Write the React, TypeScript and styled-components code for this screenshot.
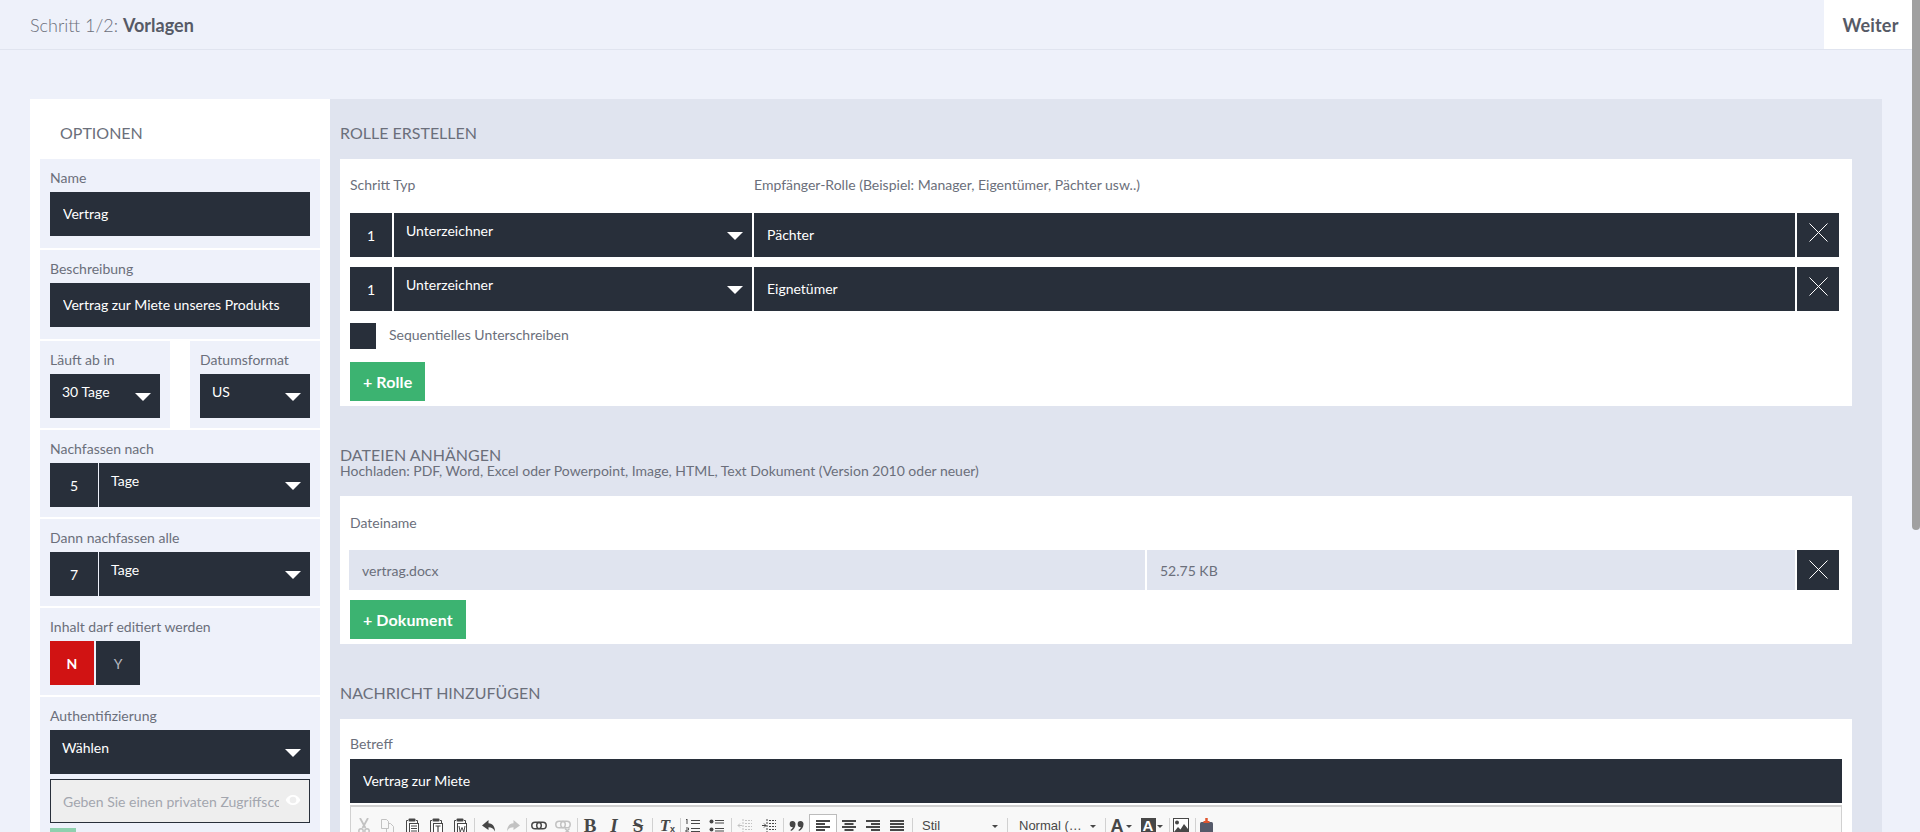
import React from "react";
import styled, { createGlobalStyle } from "styled-components";

const DARK = "#282f3a";
const BG = "#eef1fa";
const PANEL = "#e0e4ef";
const TEXT = "#6b6f7b";
const GREEN = "#3cb371";

const Global = createGlobalStyle`
  html, body { margin: 0; padding: 0; background: ${BG}; }
  body { font-family: Lato, "Open Sans", sans-serif; color: ${TEXT}; font-size: 14px; }
  * { box-sizing: border-box; }
  html { scrollbar-width: none; }
`;

const Page = styled.div`
  min-height: 1306px;
  padding-right: 8px;
`;
const ScrollThumb = styled.div`
  position: fixed;
  top: 0;
  right: 0;
  width: 8px;
  height: 530px;
  background: #a0a0a0;
  border-radius: 0 0 4px 4px;
`;
const TopBar = styled.header`
  height: 50px;
  display: flex;
  justify-content: space-between;
  align-items: stretch;
  border-bottom: 1px solid ${PANEL};
  padding-left: 30px;
`;
const Step = styled.div`
  align-self: center;
  font-size: 18px;
  font-weight: 300;
  color: ${TEXT};
  b { font-weight: 700; color: #565a66; }
`;
const NextButton = styled.button`
  width: 88px;
  border: 0;
  background: #fff;
  font: 700 18px Lato, sans-serif;
  letter-spacing: 0.2px;
  color: #565a66;
  padding: 0 0 0 5px;
`;
const Content = styled.main`
  display: flex;
  align-items: stretch;
  padding: 49px 30px 40px;
`;
const Sidebar = styled.aside`
  width: 300px;
  flex: none;
  background: #fff;
  padding: 0 10px 10px;
  display: flex;
  flex-direction: column;
  align-items: stretch;
  gap: 2px;
`;
const Panel = styled.section`
  flex: 1;
  min-width: 0;
  background: ${PANEL};
  padding: 0 30px 40px 10px;
`;
const Heading = styled.h2<{ $top?: number; $inset?: number; $tight?: boolean; $after?: number }>`
  margin: ${(p) => p.$top ?? 24}px 0 ${(p) => p.$after ?? (p.$tight ? 0 : 16)}px;
  padding-left: ${(p) => p.$inset ?? 0}px;
  font-size: 16px;
  font-weight: 400;
  line-height: ${(p) => (p.$tight ? 16 : 20)}px;
  color: ${TEXT};
  text-transform: uppercase;
`;
const SubHeading = styled.p`
  margin: 0 0 17px;
  font-size: 14px;
  line-height: 16px;
  color: ${TEXT};
`;
const Field = styled.div<{ $pad?: number; $half?: boolean }>`
  background: ${BG};
  padding: 9px 10px ${(p) => p.$pad ?? 12}px;
  min-width: 0;
  ${(p) => p.$half && "flex: 1;"}
`;
const FieldPair = styled.div`
  display: flex;
  gap: 20px;
`;
const FieldLabel = styled.label`
  display: block;
  font-size: 14px;
  line-height: 20px;
  margin-bottom: 4px;
  color: ${TEXT};
`;
const DarkInput = styled.input`
  display: block;
  width: 100%;
  height: 44px;
  border: 0;
  outline: 0;
  background: ${DARK};
  color: #fff;
  font: 400 14px Lato, sans-serif;
  padding: 0 13px 2px;
`;
const Dropdown = styled.div`
  position: relative;
  height: 44px;
  background: ${DARK};
  color: #fff;
  font-size: 14px;
  line-height: 20px;
  padding: 8px 40px 0 12px;
  min-width: 0;
  &::after {
    content: "";
    position: absolute;
    right: 9px;
    top: 19px;
    border-left: 8px solid transparent;
    border-right: 8px solid transparent;
    border-top: 8px solid #fff;
  }
`;
const Combo = styled.div`
  display: grid;
  grid-template-columns: 48px 1fr;
  gap: 1px;
`;
const NumberCell = styled.div`
  height: 44px;
  background: ${DARK};
  color: #fff;
  font-size: 14px;
  display: flex;
  align-items: center;
  justify-content: center;
`;
const Toggle = styled.div`
  display: flex;
  gap: 2px;
`;
const ToggleButton = styled.button<{ $on?: boolean }>`
  width: 44px;
  height: 44px;
  border: 0;
  padding: 0;
  background: ${(p) => (p.$on ? "#d11313" : DARK)};
  color: ${(p) => (p.$on ? "#fff" : "#b4b8c0")};
  font: ${(p) => (p.$on ? 700 : 400)} 14px Lato, sans-serif;
`;
const AccessWrap = styled.div`
  position: relative;
  margin-top: 5px;
`;
const AccessInput = styled.input`
  display: block;
  width: 100%;
  height: 44px;
  border: 1px solid ${DARK};
  outline: 0;
  background: #eee;
  font: 400 14px Lato, sans-serif;
  padding: 0 30px 0 12px;
  &::placeholder { color: #a3a6ae; opacity: 1; }
`;
const EyeIcon = styled.svg`
  position: absolute;
  right: 9px;
  top: 13px;
  width: 16px;
  height: 16px;
  fill: #fff;
`;
const GreenBox = styled.div`
  width: 26px;
  height: 26px;
  margin-top: 5px;
  background: #8fd0ae;
`;
const Card = styled.div<{ $top: number; $bottom: number }>`
  background: #fff;
  padding: ${(p) => p.$top}px 10px ${(p) => p.$bottom}px;
`;
const Columns = styled.div`
  display: grid;
  grid-template-columns: 404px 1fr;
  line-height: 20px;
  margin-bottom: 18px;
  color: ${TEXT};
`;
const ColumnLabel = styled.div`
  line-height: 20px;
  margin-bottom: 17px;
  color: ${TEXT};
`;
const RoleRow = styled.div`
  display: grid;
  grid-template-columns: 42px 358px 1fr 42px;
  gap: 2px;
  margin: 0 3px 10px 0;
`;
const CloseButton = styled.button`
  height: 100%;
  min-height: 40px;
  border: 0;
  background: ${DARK};
  padding: 10px 0 0;
  display: flex;
  justify-content: center;
  align-items: flex-start;
  svg { display: block; }
`;
const CheckRow = styled.div`
  display: flex;
  align-items: center;
  gap: 13px;
  margin: 12px 0 13px;
`;
const Check = styled.span`
  width: 26px;
  height: 26px;
  background: ${DARK};
`;
const CheckText = styled.span`
  padding-bottom: 3px;
`;
const AddButton = styled.button`
  display: block;
  height: 39px;
  border: 0;
  background: ${GREEN};
  color: #fff;
  font: 700 16px Lato, sans-serif;
  letter-spacing: 0.1px;
  padding: 0 13px;
`;
const FileRow = styled.div`
  display: grid;
  grid-template-columns: 796fr 648fr 42px;
  gap: 2px;
  height: 40px;
  margin: 0 3px 10px -1px;
`;
const FileCell = styled.div`
  background: ${PANEL};
  color: ${TEXT};
  display: flex;
  align-items: center;
  padding: 0 13px;
`;
const SubjectLabel = styled.div`
  line-height: 20px;
  margin-bottom: 5px;
`;
const Editor = styled.div`
  margin-top: 2px;
  border: 1px solid #d1d1d1;
  border-top-width: 2px;
  background: #f8f8f8;
  min-height: 300px;
`;
const Toolbar = styled.div`
  display: flex;
  align-items: flex-start;
  padding: 7px 0 0 1px;
  height: 44px;
  color: #474747;
`;
const ToolButton = styled.span<{ $active?: boolean; $w?: number; $pr?: number }>`
  flex: none;
  width: ${(p) => p.$w ?? 24}px;
  height: 24px;
  padding-right: ${(p) => p.$pr ?? 0}px;
  display: flex;
  align-items: center;
  justify-content: center;
  position: relative;
  ${(p) => p.$active && `background:#fff; border:1px solid #bcbcbc;`}
  svg { display: block; }
`;
const Sep = styled.span<{ $l: number; $r: number }>`
  flex: none;
  width: 1px;
  height: 22px;
  margin: 4px ${(p) => p.$r}px 0 ${(p) => p.$l}px;
  background: #d1d1d1;
`;
const Glyph = styled.span<{ $serif?: boolean; $italic?: boolean; $strike?: boolean; $under?: boolean; $size?: number }>`
  font-family: ${(p) => (p.$serif ? '"Liberation Serif"' : '"Liberation Sans"')}, serif;
  font-weight: 700;
  font-size: ${(p) => p.$size ?? 18}px;
  line-height: 16px;
  color: #474747;
  font-style: ${(p) => (p.$italic ? "italic" : "normal")};
  text-decoration: ${(p) => (p.$strike ? "line-through" : p.$under ? "underline" : "none")};
`;
const Clear = styled.small`
  position: absolute;
  right: 2px;
  top: 11px;
  font: 700 9px/9px "Liberation Sans", sans-serif;
  color: #474747;
`;
const BoxGlyph = styled.span`
  font: 700 15px/16px "Liberation Sans", sans-serif;
  width: 15px;
  height: 16px;
  flex: none;
  text-align: center;
  background: #474747;
  color: #fff;
`;
const Caret = styled.i<{ $right: number }>`
  position: absolute;
  width: 0;
  height: 0;
  right: ${(p) => p.$right}px;
  top: 11px;
  border-left: 3px solid transparent;
  border-right: 3px solid transparent;
  border-top: 3px solid #474747;
`;
const ComboBox = styled.span<{ $w: number; $indent: number }>`
  flex: none;
  position: relative;
  width: ${(p) => p.$w}px;
  height: 24px;
  padding-left: ${(p) => p.$indent}px;
  font: 400 13px/24px "Liberation Sans", sans-serif;
  color: #484848;
  i {
    position: absolute;
    right: 9px;
    top: 11px;
    border-left: 3.5px solid transparent;
    border-right: 3.5px solid transparent;
    border-top: 3.5px solid #474747;
  }
`;

type IconProps = { children: React.ReactNode; faded?: boolean };
const Ico = ({ children, faded }: IconProps) => (
  <svg width="16" height="16" viewBox="0 0 16 16" fill="none" opacity={faded ? 0.3 : 1}>
    {children}
  </svg>
);
const S = { stroke: "#474747", strokeWidth: 1 };

const Cut = () => (
  <Ico faded>
    <path d="M4 0l5.500 10M12 0L6.500 10" stroke="#474747" strokeWidth="1.800" />
    <circle cx="5" cy="13" r="2.200" stroke="#474747" strokeWidth={1.4} />
    <circle cx="11" cy="13" r="2.200" stroke="#474747" strokeWidth={1.4} />
  </Ico>
);
const Copy = () => (
  <Ico faded>
    <path d="M1.500 1.500h5l2 2v7h-7zM8.500 5.500h2l3 3v7h-7v-5" {...S} />
  </Ico>
);
const PasteBase = ({ children }: { children: React.ReactNode }) => (
  <Ico>
    <path d="M4 2.500H2.500v13H4M12 2.500h1.500v3" {...S} />
    <rect x="4.500" y="0.500" width="7" height="3" rx="1" fill="#474747" />
    <rect x="5.500" y="5.500" width="9" height="10" {...S} fill="#fff" />
    {children}
  </Ico>
);
const Paste = () => (
  <PasteBase>
    <path d="M7 8h6M7 10.500h6M7 13h6" {...S} />
  </PasteBase>
);
const PasteText = () => (
  <PasteBase>
    <path d="M7.500 8h5M10 8v6" stroke="#474747" strokeWidth={1.2} />
  </PasteBase>
);
const PasteWord = () => (
  <PasteBase>
    <path d="M7 8l1.200 6L10 9.500 11.800 14 13 8" {...S} />
  </PasteBase>
);
const Undo = () => (
  <Ico>
    <path d="M7.500 2L1 7.500 7.500 12V9.200c3 0 5 1 6.500 4.300C14 9 12 5.500 7.500 5.300z" fill="#474747" />
  </Ico>
);
const Redo = () => (
  <Ico faded>
    <path d="M8.500 2L15 7.500 8.500 12V9.200c-3 0-5 1-6.500 4.300C2 9 4 5.500 8.500 5.300z" fill="#474747" />
  </Ico>
);
const Link = () => (
  <Ico>
    <rect x="0.800" y="4.200" width="9.500" height="6.600" rx="3.300" stroke="#474747" strokeWidth="1.500" />
    <rect x="5.700" y="4.200" width="9.500" height="6.600" rx="3.300" stroke="#474747" strokeWidth="1.500" />
  </Ico>
);
const Unlink = () => (
  <Ico faded>
    <rect x="0.800" y="3.200" width="9.500" height="6.600" rx="3.300" stroke="#474747" strokeWidth="1.500" />
    <rect x="5.700" y="3.200" width="9.500" height="6.600" rx="3.300" stroke="#474747" strokeWidth="1.500" />
    <path d="M10 10.500l4.500 4.500M14.500 10.500L10 15" stroke="#474747" strokeWidth="1.500" />
  </Ico>
);
const NumList = () => (
  <Ico>
    <path d="M6 2.500h9M6 5.500h9M6 10.500h9M6 13.500h9" stroke="#474747" />
    <path d="M2 1v5M1 2l1-1M1 10h2.500v2H1v2h3" {...S} />
  </Ico>
);
const BulList = () => (
  <Ico>
    <circle cx="2.500" cy="3.500" r="2" fill="#474747" />
    <circle cx="2.500" cy="11.500" r="2" fill="#474747" />
    <path d="M6 2.500h9M6 5h9M6 10.500h9M6 13h9" stroke="#474747" />
  </Ico>
);
const Outdent = () => (
  <Ico faded>
    <path d="M8 2.500h7M8 5.500h7M8 8.500h7M8 11.500h7M6 1v14" stroke="#474747" strokeDasharray="2 1" />
    <path d="M1 7.500h4M3 5.500l-2 2 2 2" {...S} />
  </Ico>
);
const Indent = () => (
  <Ico>
    <path d="M8 2.500h7M8 5.500h7M8 8.500h7M8 11.500h7M6 1v14" stroke="#474747" strokeDasharray="2 1" />
    <path d="M1 7.500h4M3 5.500l2 2-2 2" {...S} />
  </Ico>
);
const Quote = () => (
  <Ico>
    <path d="M3.500 3a3 3 0 0 1 3 3.500c-.2 3-2 5.500-4.500 6.500l-.5-1c1.300-.8 2-1.800 2.300-3A3 3 0 0 1 3.500 3zM11.500 3a3 3 0 0 1 3 3.500c-.2 3-2 5.500-4.500 6.500l-.5-1c1.300-.8 2-1.800 2.300-3A3 3 0 0 1 11.500 3z" fill="#474747" />
  </Ico>
);
const Align = ({ kind }: { kind: "left" | "center" | "right" | "justify" }) => {
  const bars = [14, 9, 14, 9];
  return (
    <Ico>
      {bars.map((w0, i) => {
        const w = kind === "justify" ? 14 : w0;
        const x = kind === "left" || kind === "justify" ? 1 : kind === "center" ? 8 - w / 2 : 15 - w;
        return <rect key={i} x={x} y={2 + i * 3} width={w} height="2" fill="#474747" />;
      })}
    </Ico>
  );
};
const ImageIcon = () => (
  <Ico>
    <rect x="0.500" y="0.500" width="15" height="14" stroke="#474747" fill="#fff" />
    <circle cx="4" cy="4.500" r="2" fill="#474747" />
    <path d="M1 14l4-5 2.500 2.500L11 6l4 5v3.500z" fill="#474747" />
  </Ico>
);
const PluginIcon = () => (
  <Ico>
    <rect x="1" y="4" width="13" height="12" rx="1.500" fill="#555a6a" />
    <path d="M7.500 0v4.500" stroke="#e0552e" strokeWidth="2.500" />
    <path d="M4.500 3h6v2h-6z" fill="#e0552e" />
  </Ico>
);
const CloseIcon = () => (
  <svg width="19" height="19" viewBox="0 0 19 19" fill="none">
    <path d="M.5.5l18 18M18.500.5l-18 18" stroke="#fff" strokeWidth="1" />
  </svg>
);

const Tool = ({ children, active, w, pr }: { children: React.ReactNode; active?: boolean; w?: number; pr?: number }) => (
  <ToolButton $active={active} $w={w} $pr={pr}>
    {children}
  </ToolButton>
);

const RoleLine = ({ name }: { name: string }) => (
  <RoleRow>
    <NumberCell>1</NumberCell>
    <Dropdown>Unterzeichner</Dropdown>
    <DarkInput defaultValue={name} />
    <CloseButton aria-label="Entfernen">
      <CloseIcon />
    </CloseButton>
  </RoleRow>
);

export default function App() {
  return (
    <Page>
      <Global />
      <ScrollThumb />
      <TopBar>
        <Step>
          Schritt 1/2: <b>Vorlagen</b>
        </Step>
        <NextButton>Weiter</NextButton>
      </TopBar>
      <Content>
        <Sidebar>
          <Heading $inset={20} $after={14}>Optionen</Heading>
          <Field>
            <FieldLabel>Name</FieldLabel>
            <DarkInput defaultValue="Vertrag" />
          </Field>
          <Field>
            <FieldLabel>Beschreibung</FieldLabel>
            <DarkInput defaultValue="Vertrag zur Miete unseres Produkts" />
          </Field>
          <FieldPair>
            <Field $half $pad={10}>
              <FieldLabel>Läuft ab in</FieldLabel>
              <Dropdown>30 Tage</Dropdown>
            </Field>
            <Field $half $pad={10}>
              <FieldLabel>Datumsformat</FieldLabel>
              <Dropdown>US</Dropdown>
            </Field>
          </FieldPair>
          <Field $pad={10}>
            <FieldLabel>Nachfassen nach</FieldLabel>
            <Combo>
              <NumberCell>5</NumberCell>
              <Dropdown>Tage</Dropdown>
            </Combo>
          </Field>
          <Field $pad={10}>
            <FieldLabel>Dann nachfassen alle</FieldLabel>
            <Combo>
              <NumberCell>7</NumberCell>
              <Dropdown>Tage</Dropdown>
            </Combo>
          </Field>
          <Field $pad={10}>
            <FieldLabel>Inhalt darf editiert werden</FieldLabel>
            <Toggle>
              <ToggleButton $on>N</ToggleButton>
              <ToggleButton>Y</ToggleButton>
            </Toggle>
          </Field>
          <Field>
            <FieldLabel>Authentifizierung</FieldLabel>
            <Dropdown>Wählen</Dropdown>
            <AccessWrap>
              <AccessInput placeholder="Geben Sie einen privaten Zugriffscode" />
              <EyeIcon viewBox="0 0 24 24">
                <path d="M12 4.500C7 4.500 2.700 7.600 1 12c1.700 4.400 6 7.500 11 7.500s9.300-3.100 11-7.500c-1.700-4.400-6-7.500-11-7.500zm0 12.500a5 5 0 1 1 0-10 5 5 0 0 1 0 10z" />
              </EyeIcon>
            </AccessWrap>
            <GreenBox />
          </Field>
        </Sidebar>
        <Panel>
          <Heading>Rolle erstellen</Heading>
          <Card $top={16} $bottom={5}>
            <Columns>
              <div>Schritt Typ</div>
              <div>Empfänger-Rolle (Beispiel: Manager, Eigentümer, Pächter usw..)</div>
            </Columns>
            <RoleLine name="Pächter" />
            <RoleLine name="Eignetümer" />
            <CheckRow>
              <Check />
              <CheckText>Sequentielles Unterschreiben</CheckText>
            </CheckRow>
            <AddButton>+ Rolle</AddButton>
          </Card>

          <Heading $top={41} $tight>
            Dateien anhängen
          </Heading>
          <SubHeading>Hochladen: PDF, Word, Excel oder Powerpoint, Image, HTML, Text Dokument (Version 2010 oder neuer)</SubHeading>
          <Card $top={17} $bottom={5}>
            <ColumnLabel>Dateiname</ColumnLabel>
            <FileRow>
              <FileCell>vertrag.docx</FileCell>
              <FileCell>52.75 KB</FileCell>
              <CloseButton aria-label="Entfernen">
                <CloseIcon />
              </CloseButton>
            </FileRow>
            <AddButton>+ Dokument</AddButton>
          </Card>

          <Heading $top={39}>Nachricht hinzufügen</Heading>
          <Card $top={15} $bottom={10}>
            <SubjectLabel>Betreff</SubjectLabel>
            <DarkInput defaultValue="Vertrag zur Miete" />
            <Editor>
              <Toolbar>
                <Tool><Cut /></Tool>
                <Tool><Copy /></Tool>
                <Tool><Paste /></Tool>
                <Tool><PasteText /></Tool>
                <Tool><PasteWord /></Tool>
                <Sep $l={2} $r={2} />
                <Tool><Undo /></Tool>
                <Tool><Redo /></Tool>
                <Sep $l={1} $r={0} />
                <Tool><Link /></Tool>
                <Tool><Unlink /></Tool>
                <Sep $l={2} $r={0} />
                <Tool><Glyph $serif $size={19}>B</Glyph></Tool>
                <Tool><Glyph $serif $italic $size={19}>I</Glyph></Tool>
                <Tool><Glyph $serif $strike $size={19}>S</Glyph></Tool>
                <Sep $l={2} $r={0} />
                <Tool><Glyph $serif $italic $under $size={17}>T</Glyph><Clear>x</Clear></Tool>
                <Sep $l={3} $r={0} />
                <Tool><NumList /></Tool>
                <Tool><BulList /></Tool>
                <Sep $l={2} $r={1} />
                <Tool><Outdent /></Tool>
                <Tool><Indent /></Tool>
                <Sep $l={2} $r={1} />
                <Tool><Quote /></Tool>
                <Tool active w={28}><Align kind="left" /></Tool>
                <Tool><Align kind="center" /></Tool>
                <Tool><Align kind="right" /></Tool>
                <Tool><Align kind="justify" /></Tool>
                <Sep $l={3} $r={0} />
                <ComboBox $w={94} $indent={9}>Stil<i /></ComboBox>
                <Sep $l={0} $r={0} />
                <ComboBox $w={97} $indent={11}>Normal (…<i /></ComboBox>
                <Sep $l={0} $r={0} />
                <Tool w={30} pr={8}><Glyph>A</Glyph><Caret $right={4} /></Tool>
                <Tool w={32} pr={8}><BoxGlyph>A</BoxGlyph><Caret $right={5} /></Tool>
                <Sep $l={1} $r={0} />
                <Tool w={22}><ImageIcon /></Tool>
                <Sep $l={3} $r={0} />
                <Tool w={22}><PluginIcon /></Tool>
              </Toolbar>
            </Editor>
          </Card>
        </Panel>
      </Content>
    </Page>
  );
}
